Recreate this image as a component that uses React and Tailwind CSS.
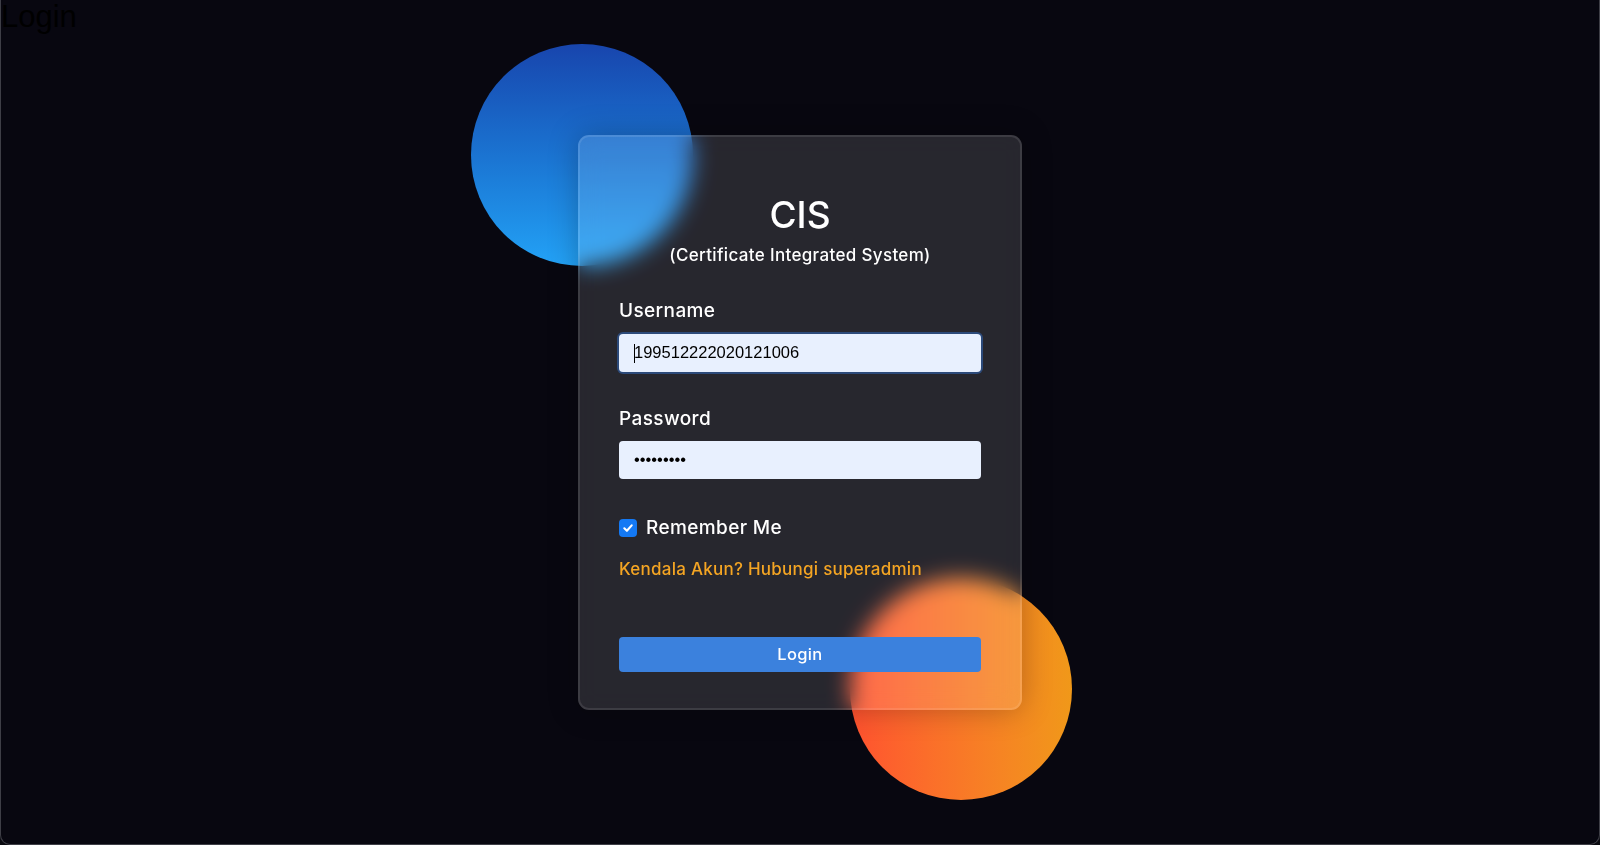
export default function App() {
  return (
    <div className="w-full h-[845px] bg-[#0a0a10]">
      <div className="relative w-full h-[845px] bg-[#080710] border-x border-b border-[#3e3e46] rounded-b-[10px] overflow-hidden flex items-center justify-center font-['Inter',sans-serif]">
        <div className="absolute left-0 top-0 text-[31px] leading-[34px] text-black font-['Liberation_Sans',Arial,sans-serif]">
          Login
        </div>
        <div className="relative w-[444px] h-[575px]">
          <div className="absolute left-[-107px] top-[-91px] w-[222px] h-[222px] rounded-full bg-linear-to-b from-[#1845ad] to-[#23a2f6]" />
          <div className="absolute left-[272px] top-[443px] w-[222px] h-[222px] rounded-full bg-linear-to-r from-[#ff512f] to-[#f09819]" />
          <form
            onSubmit={(e) => e.preventDefault()}
            className="relative z-10 flex flex-col w-full h-full rounded-[11px] border-2 border-[rgba(255,255,255,0.1)] bg-[rgba(255,255,255,0.13)] backdrop-blur-[11px] shadow-[0_0_30px_rgba(0,0,0,0.25)] px-[39px] pt-[55px]"
          >
            <h3 className="text-center text-white text-[37px] font-medium leading-[46px]">CIS</h3>
            <p className="mt-[5px] text-center text-white text-[17px] font-medium tracking-[0.02em] leading-[24px]">
              (Certificate Integrated System)
            </p>
            <label className="mt-[32px] block text-white text-[19px] font-medium tracking-[0.02em] leading-[24px]">
              Username
            </label>
            <div className="relative mt-[11px]">
              <input
                type="text"
                defaultValue="199512222020121006"
                className="block w-full h-[38px] rounded-[4px] bg-[#e8f0fe] pl-[15px] pr-[10px] text-[16.5px] text-black font-['Liberation_Sans',Arial,sans-serif] outline-none ring-2 ring-[#2c4a7a]"
              />
              <span className="absolute left-[15px] top-[10px] w-px h-[19px] bg-black" />
            </div>
            <label className="mt-[35px] block text-white text-[19px] font-medium tracking-[0.02em] leading-[24px]">
              Password
            </label>
            <input
              type="password"
              defaultValue="123456789"
              className="mt-[10px] block w-full h-[38px] rounded-[4px] bg-[#e8f0fe] pl-[15px] pr-[10px] text-[16.5px] text-black font-['Liberation_Sans',Arial,sans-serif] outline-none"
            />
            <div className="mt-[37px] flex items-center gap-[9px] h-[24px]">
              <span className="flex items-center justify-center w-[18px] h-[18px] rounded-[4px] bg-[#1479f4]">
                <svg width="18" height="18" viewBox="0 0 18 18">
                  <polyline
                    points="5.3,9.3 7.9,11.8 12.7,6.4"
                    fill="none"
                    stroke="white"
                    strokeWidth="2.1"
                    strokeLinecap="round"
                    strokeLinejoin="round"
                  />
                </svg>
              </span>
              <span className="text-white text-[19px] font-medium tracking-[0.02em] leading-[24px]">Remember Me</span>
            </div>
            <p className="mt-[17px] text-[#f4a523] text-[17px] font-medium tracking-[0.015em] leading-[24px]">
              Kendala Akun? Hubungi superadmin
            </p>
            <button
              type="submit"
              className="mt-[56px] w-full h-[35px] rounded-[4px] bg-[#3b81dd] text-white text-[16.5px] font-medium tracking-[0.02em]"
            >
              Login
            </button>
          </form>
        </div>
      </div>
    </div>
  );
}
